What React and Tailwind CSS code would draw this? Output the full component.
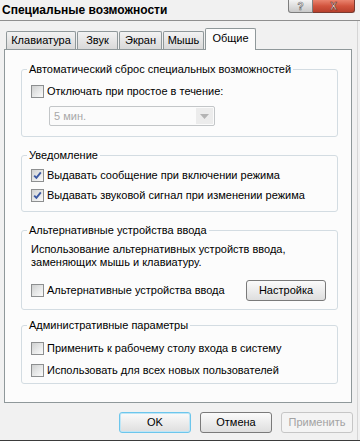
const FONT = "font-['Liberation_Sans','DejaVu_Sans',sans-serif]"

function CheckBox({ checked }) {
  return (
    <span className="w-[13px] h-[13px] shrink-0 border border-[#8d8f90] bg-linear-to-br from-[#cfd0d0] via-[#e6e7e7] to-[#fbfbfb] flex items-center justify-center">
      {checked && (
        <svg width="9" height="9" viewBox="0 0 9 9">
          <path d="M1.2 4.6 L3.4 6.9 L7.8 1.4" fill="none" stroke="#3d5aa3" strokeWidth="1.9" />
        </svg>
      )}
    </span>
  )
}

function Row({ checked, label, className = '' }) {
  return (
    <div className={`flex items-center h-[13px] gap-[3px] ${className}`}>
      <CheckBox checked={checked} />
      <span className="leading-[13px] whitespace-nowrap">{label}</span>
    </div>
  )
}

function Group({ title, className = '', children }) {
  return (
    <div className={`relative w-[317px] border border-[#d3dce2] rounded-[3px] pl-[9px] ${className}`}>
      <span className="absolute -top-[7px] left-[5px] px-[2px] bg-[#fcfcfc] leading-[13px] whitespace-nowrap">{title}</span>
      {children}
    </div>
  )
}

function Btn({ children, focus, disabled, className = '' }) {
  return (
    <div
      className={`w-[72px] h-[21px] rounded-[3px] border flex items-center justify-center leading-[13px] ${
        disabled
          ? 'border-[#c6c6c6] text-[#a3a3a3] bg-[#f4f4f4]'
          : focus
          ? 'border-[#6cc6ec] bg-linear-to-b from-[#fbfbfb] to-[#dedede] shadow-[inset_0_0_0_1px_#bfe6f6]'
          : 'border-[#7a7a7a] bg-linear-to-b from-[#fbfbfb] to-[#dedede]'
      } ${className}`}
    >
      {children}
    </div>
  )
}

const TABS = [
  { l: 'Клавиатура', w: 'w-[70px]' },
  { l: 'Звук', w: 'w-[41px]' },
  { l: 'Экран', w: 'w-[43px]' },
  { l: 'Мышь', w: 'w-[41px]' },
]

export default function App() {
  return (
    <div className={`${FONT} text-[11px] text-black w-[360px] h-[441px] bg-[#f1f1f1] overflow-hidden flex flex-col border-b border-[#3b3b3b]`}>
      {/* title bar */}
      <div className="h-[21px] shrink-0 flex items-start justify-between border-b border-[#8f8f8f]">
        <div className="pl-[2px] pt-[3px] font-bold text-[12px] leading-[14px]">Специальные возможности</div>
        <div className="flex mr-[5px]">
          <div className="w-[25px] h-[13px] rounded-bl-[3px] border border-t-0 border-[#7d7d7d] bg-linear-to-b from-[#f4f4f4] to-[#c9c9c9] flex items-center justify-center text-[10px] leading-[11px] font-bold text-white [-webkit-text-stroke:0.6px_#666]">
            ?
          </div>
          <div className="w-[42px] h-[13px] rounded-br-[3px] border border-t-0 border-l-0 border-[#7a3a30] bg-linear-to-b from-[#e9836e] via-[#d2543e] to-[#b8402c] flex items-center justify-center text-[10px] leading-[11px] font-bold text-white [-webkit-text-stroke:0.6px_#6b2a20]">
            X
          </div>
        </div>
      </div>

      <div className="flex-1 flex flex-col border-r border-[#d6d6d6] mr-[2px]">
        {/* tabs */}
        <div className="mt-[7px] h-[22px] flex items-end pl-[6px] -mb-px relative z-10">
          {TABS.map(t => (
            <div
              key={t.l}
              className={`${t.w} h-[18px] mb-px mr-px border border-b-0 border-[#8f989a] rounded-t-[2px] bg-linear-to-b from-[#f2f2f2] to-[#d9d9d9] flex items-center justify-center leading-[13px]`}
            >
              {t.l}
            </div>
          ))}
          <div className="w-[51px] h-[22px] border border-b-0 border-[#8f989a] rounded-t-[2px] bg-[#fcfcfc] flex items-start justify-center pt-[3px] leading-[13px]">
            Общие
          </div>
        </div>

        {/* panel */}
        <div className="ml-[4px] w-[348px] h-[354px] border border-[#8f989a] bg-[#fcfcfc] pl-[16px] pt-[19px]">
          <Group title="Автоматический сброс специальных возможностей" className="h-[68px] pt-[15px]">
            <Row label="Отключать при простое в течение:" />
            <div className="mt-[8px] ml-[18px] w-[166px] h-[20px] border border-[#c3c6c8] rounded-[2px] flex items-center bg-[#fbfbfb]">
              <span className="flex-1 pl-[4px] text-[#a8a8a8] leading-[13px]">5 мин.</span>
              <span className="w-[17px] h-[16px] mr-px bg-[#ececec] flex items-center justify-center">
                <svg width="9" height="5" viewBox="0 0 9 5">
                  <path d="M0 0 H9 L4.5 5 Z" fill="#b4b4b4" />
                </svg>
              </span>
            </div>
          </Group>

          <Group title="Уведомление" className="mt-[18px] h-[57px] pt-[13px]">
            <Row checked label="Выдавать сообщение при включении режима" />
            <Row checked label="Выдавать звуковой сигнал при изменении режима" className="mt-[7px]" />
          </Group>

          <Group title="Альтернативные устройства ввода" className="mt-[18px] h-[80px] pt-[12px]">
            <div className="leading-[13px]">
              Использование альтернативных устройств ввода,
              <br />
              заменяющих мышь и клавиатуру.
            </div>
            <div className="mt-[11px] flex items-center justify-between pr-[11px]">
              <Row label="Альтернативные устройства ввода" />
              <Btn className="w-[80px] h-[19px]">Настройка</Btn>
            </div>
          </Group>

          <Group title="Административные параметры" className="mt-[15px] h-[59px] pt-[16px]">
            <Row label="Применить к рабочему столу входа в систему" />
            <Row label="Использовать для всех новых пользователей" className="mt-[9px]" />
          </Group>
        </div>

        {/* buttons */}
        <div className="mt-[9px] flex justify-end gap-[9px] pr-[4px]">
          <Btn focus>OK</Btn>
          <Btn>Отмена</Btn>
          <Btn disabled>Применить</Btn>
        </div>
      </div>
    </div>
  )
}
